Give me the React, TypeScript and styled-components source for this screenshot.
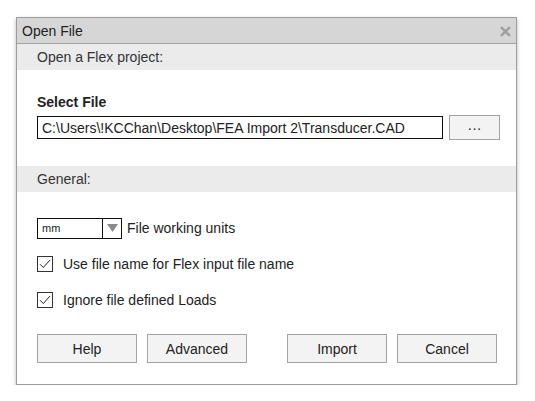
import React from "react";
import styled, { createGlobalStyle } from "styled-components";

const Global = createGlobalStyle`
  html, body { margin: 0; padding: 0; background: #ffffff; }
  body { font-family: "Liberation Sans", Arial, Helvetica, sans-serif; color: #222; }
  * { box-sizing: border-box; }
`;

const Page = styled.div`
  padding: 17px 0 0 16px;
`;

const Dialog = styled.div`
  width: 501px;
  background: #fff;
  border: 1px solid #9c9c9c;
  box-shadow: 0 2px 4px rgba(0, 0, 0, 0.28);
  display: flex;
  flex-direction: column;
`;

const TitleBar = styled.div`
  height: 26px;
  background: #d6d6d6;
  border-bottom: 1px solid #a3a3a3;
  display: flex;
  align-items: center;
  justify-content: space-between;
  padding: 0 5px 0 5px;
  font-size: 14px;
  color: #222;
`;

const CloseIcon = styled.svg`
  width: 11px;
  height: 11px;
  margin-top: 2px;
`;

const SectionHeader = styled.div`
  height: 26px;
  background: #ebebeb;
  display: flex;
  align-items: center;
  padding-left: 20px;
  font-size: 14px;
  color: #333;
`;

const FileSection = styled.div`
  padding: 24px 15px 26px 20px;
  display: flex;
  flex-direction: column;
`;

const FieldLabel = styled.div`
  font-weight: bold;
  font-size: 14px;
  line-height: 16px;
  height: 16px;
  margin-bottom: 5px;
  color: #222;
`;

const FileRow = styled.div`
  display: flex;
  align-items: center;
  gap: 6px;
  height: 25px;
`;

const PathInput = styled.div`
  width: 406px;
  height: 23px;
  border: 1px solid #111;
  display: flex;
  align-items: center;
  padding-left: 4px;
  font-size: 14px;
  color: #222;
  white-space: nowrap;
  overflow: hidden;
`;

const Button = styled.button<{ $w: number; $h: number }>`
  width: ${(p) => p.$w}px;
  height: ${(p) => p.$h}px;
  flex-shrink: 0;
  background: #f3f3f3;
  border: 1px solid #a2a2a2;
  border-radius: 0;
  padding: 0;
  font-family: "Liberation Sans", Arial, Helvetica, sans-serif;
  font-size: 14px;
  color: #222;
  display: flex;
  align-items: center;
  justify-content: center;
`;

const Options = styled.div`
  padding: 25px 20px 0 20px;
  display: flex;
  flex-direction: column;
  gap: 14px;
`;

const OptionRow = styled.div`
  height: 22px;
  display: flex;
  align-items: center;
  font-size: 14px;
  color: #222;
`;

const Select = styled.div`
  width: 85px;
  height: 21px;
  border: 1px solid #111;
  display: flex;
  margin-right: 5px;
`;

const SelectValue = styled.div`
  flex: 1;
  font-size: 11px;
  display: flex;
  align-items: center;
  padding-left: 4px;
  border-right: 1px solid #111;
  color: #222;
`;

const SelectArrow = styled.div`
  width: 18px;
  display: flex;
  align-items: center;
  justify-content: center;
`;

const CheckBox = styled.div`
  width: 16px;
  height: 16px;
  border: 1px solid #333;
  margin-right: 10px;
  display: flex;
  align-items: center;
  justify-content: center;
`;

const ButtonBar = styled.div`
  margin-top: 23px;
  padding: 0 18px 21px 20px;
  display: flex;
  gap: 10px;
`;

const Spacer = styled.div`
  width: 20px;
  flex-shrink: 0;
`;

const Check = () => (
  <svg width="12" height="10" viewBox="0 0 12 10">
    <path d="M1 5.2 L4.3 8.5 L11 1" fill="none" stroke="#222" strokeWidth="1" />
  </svg>
);

export default function App() {
  return (
    <Page>
      <Global />
      <Dialog>
        <TitleBar>
          <span>Open File</span>
          <CloseIcon viewBox="0 0 11 11">
            <path d="M1.8 1.8 L9.2 9.2 M9.2 1.8 L1.8 9.2" stroke="#a0a0a0" strokeWidth="2.6" strokeLinecap="round" />
          </CloseIcon>
        </TitleBar>
        <SectionHeader>Open a Flex project:</SectionHeader>
        <FileSection>
          <FieldLabel>Select File</FieldLabel>
          <FileRow>
            <PathInput>C:\Users\!KCChan\Desktop\FEA Import 2\Transducer.CAD</PathInput>
            <Button $w={51} $h={25}>···</Button>
          </FileRow>
        </FileSection>
        <SectionHeader>General:</SectionHeader>
        <Options>
          <OptionRow>
            <Select>
              <SelectValue>mm</SelectValue>
              <SelectArrow>
                <svg width="11" height="8" viewBox="0 0 11 8">
                  <path d="M0 0 H11 L5.5 8 Z" fill="#8a8a8a" />
                </svg>
              </SelectArrow>
            </Select>
            File working units
          </OptionRow>
          <OptionRow>
            <CheckBox>
              <Check />
            </CheckBox>
            Use file name for Flex input file name
          </OptionRow>
          <OptionRow>
            <CheckBox>
              <Check />
            </CheckBox>
            Ignore file defined Loads
          </OptionRow>
        </Options>
        <ButtonBar>
          <Button $w={100} $h={29}>Help</Button>
          <Button $w={100} $h={29}>Advanced</Button>
          <Spacer />
          <Button $w={100} $h={29}>Import</Button>
          <Button $w={100} $h={29}>Cancel</Button>
        </ButtonBar>
      </Dialog>
    </Page>
  );
}
